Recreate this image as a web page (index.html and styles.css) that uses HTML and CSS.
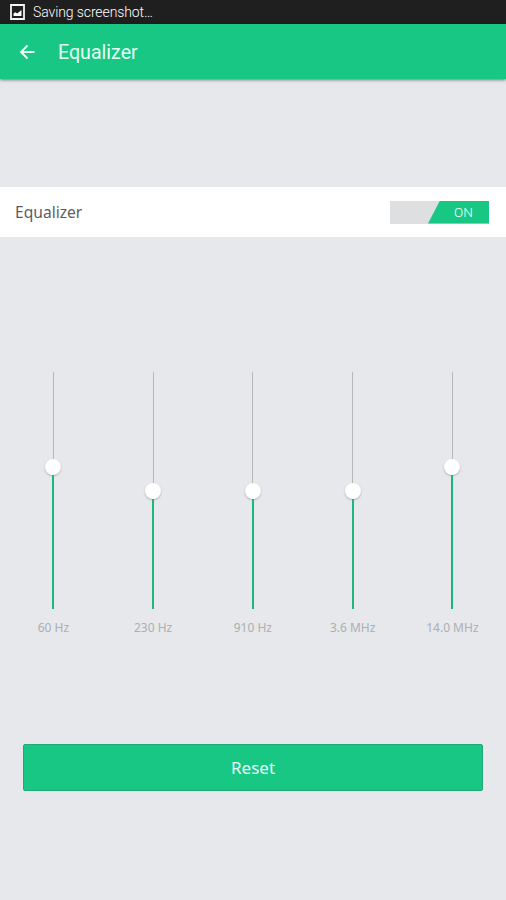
FILE: index.html
```html
<!DOCTYPE html>
<html lang="en">
<head>
<meta charset="utf-8">
<title>Equalizer</title>
<link rel="stylesheet" href="styles.css">
</head>
<body>
<div class="status">
  <svg class="status-icon" viewBox="0 0 15 16"><path d="M1 1h13v14H1z" fill="none" stroke="#f4f4f4" stroke-width="1.8"/><path d="M3.500 12V9.500l1.700-1.300 2 1.400L11.500 6v6z" fill="#fff"/></svg>
  <span class="status-text">Saving screenshot…</span>
</div>
<header class="bar">
  <svg class="back" viewBox="0 0 16 16"><path d="M15.5 8H2M8.500 1.500 2 8l6.500 6.500" fill="none" stroke="#e9fff5" stroke-width="1.9"/></svg>
  <h1 class="title">Equalizer</h1>
</header>
<main class="content">
  <section class="row">
    <span class="row-label">Equalizer</span>
    <div class="switch"><div class="switch-on"><span>ON</span></div></div>
  </section>
  <section class="bands">
    <div class="band"><div class="track"><i class="rest high"></i><i class="knob"></i><i class="fill"></i></div><span class="freq">60 Hz</span></div>
    <div class="band"><div class="track"><i class="rest"></i><i class="knob"></i><i class="fill"></i></div><span class="freq">230 Hz</span></div>
    <div class="band"><div class="track"><i class="rest"></i><i class="knob"></i><i class="fill"></i></div><span class="freq">910 Hz</span></div>
    <div class="band"><div class="track"><i class="rest"></i><i class="knob"></i><i class="fill"></i></div><span class="freq">3.6 MHz</span></div>
    <div class="band"><div class="track"><i class="rest high"></i><i class="knob"></i><i class="fill"></i></div><span class="freq">14.0 MHz</span></div>
  </section>
  <button class="reset"><span>Reset</span></button>
</main>
</body>
</html>
```
FILE: styles.css
```css
* { box-sizing: border-box; }
body { margin: 0; height: 900px; background: #e6e8eb; font-family: "Noto Sans", sans-serif; overflow: hidden; }
.status { height: 24px; background: #1f1f1f; color: #fff; display: flex; align-items: center; padding-left: 10px; gap: 8px; }
.status-icon { width: 15px; height: 16px; }
.status-text { font: 300 14px/24px Roboto, sans-serif; letter-spacing: -.1px; }
.bar { height: 55px; background: #19c785; display: flex; align-items: center; padding-left: 19px; gap: 23px; box-shadow: 0 1px 3px rgba(0,0,0,.5); }
.back { width: 16px; height: 16px; }
.title { margin: 0; padding-top: 3px; color: #e4fff3; font: 400 19.600px/28px Roboto, sans-serif; }
.content { display: flex; flex-direction: column; padding-top: 108px; }
.row { height: 50px; background: #fff; display: flex; align-items: center; justify-content: space-between; padding: 0 17px 0 15px; color: #5c5c64; font-size: 15.600px; }
.switch { width: 99px; height: 23px; background: #dedfe0; display: flex; justify-content: flex-end; }
.switch-on { width: 61px; background: #19c785; clip-path: polygon(12px 0, 100% 0, 100% 100%, 0 100%); color: #effff8; font: 300 13.500px/23px Roboto, sans-serif; padding-left: 26px; }
.bands { display: grid; grid-template-columns: repeat(5, 99.75px); margin: 135px 0 0 3.5px; }
.band { display: flex; flex-direction: column; align-items: center; }
.track { height: 237px; width: 16px; display: flex; flex-direction: column; align-items: center; }
.rest { width: 1px; height: 111px; background: #b5b7b9; }
.rest.high { height: 87px; }
.knob { width: 16px; height: 16px; border-radius: 50%; background: #fff; box-shadow: 0 1px 2px rgba(0,0,0,.25); flex: none; }
.fill { width: 2px; flex: 1; background: #1db77e; }
.freq { color: #adafb2; font-size: 12px; line-height: 18px; margin-top: 10px; white-space: nowrap; }
.reset { margin: 107px 23px 0; height: 47px; border: 1px solid #20a978; border-radius: 2px; background: #19c785; color: #e6fff4; font: 17px "Noto Sans", sans-serif; padding: 0; }
```
